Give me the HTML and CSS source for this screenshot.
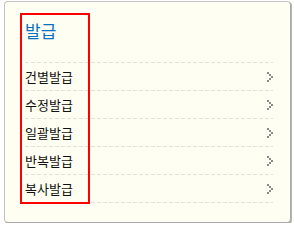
FILE: index.html
```html
<!DOCTYPE html>
<html lang="ko">
<head>
	<meta charset="utf-8">
	<title>발급</title>
	<link rel="stylesheet" href="styles.css">
</head>
<body>
	<div class="panel">
		<h2 class="panel-title">발급</h2>
		<ul class="menu-list">
			<li><span>건별발급</span><svg class="arrow" width="6" height="10" viewBox="0 0 6 10"><rect x="0" y="0" width="2" height="2"/><rect x="2" y="2" width="2" height="2"/><rect x="4" y="4" width="2" height="2"/><rect x="2" y="6" width="2" height="2"/><rect x="0" y="8" width="2" height="2"/></svg></li>
			<li><span>수정발급</span><svg class="arrow" width="6" height="10" viewBox="0 0 6 10"><rect x="0" y="0" width="2" height="2"/><rect x="2" y="2" width="2" height="2"/><rect x="4" y="4" width="2" height="2"/><rect x="2" y="6" width="2" height="2"/><rect x="0" y="8" width="2" height="2"/></svg></li>
			<li><span>일괄발급</span><svg class="arrow" width="6" height="10" viewBox="0 0 6 10"><rect x="0" y="0" width="2" height="2"/><rect x="2" y="2" width="2" height="2"/><rect x="4" y="4" width="2" height="2"/><rect x="2" y="6" width="2" height="2"/><rect x="0" y="8" width="2" height="2"/></svg></li>
			<li><span>반복발급</span><svg class="arrow" width="6" height="10" viewBox="0 0 6 10"><rect x="0" y="0" width="2" height="2"/><rect x="2" y="2" width="2" height="2"/><rect x="4" y="4" width="2" height="2"/><rect x="2" y="6" width="2" height="2"/><rect x="0" y="8" width="2" height="2"/></svg></li>
			<li><span>복사발급</span><svg class="arrow" width="6" height="10" viewBox="0 0 6 10"><rect x="0" y="0" width="2" height="2"/><rect x="2" y="2" width="2" height="2"/><rect x="4" y="4" width="2" height="2"/><rect x="2" y="6" width="2" height="2"/><rect x="0" y="8" width="2" height="2"/></svg></li>
		</ul>
		<div class="highlight"></div>
	</div>
</body>
</html>
```

FILE: styles.css
```css
html, body {
	margin:0;
	padding:0;
	background:#ffffff;
}

body {
	font-family:"Noto Sans CJK KR", "Noto Sans", sans-serif;
}

.panel {
	position:relative;
	box-sizing:border-box;
	margin:1px 3px 0 4px;
	height:222px;
	padding:19px 17px 0 20px;
	background:#fffef2;
	border:1px solid #c4c4c4;
	border-right-color:#a9a9a9;
	border-bottom-color:#a9a9a9;
	border-radius:4px;
	box-shadow:1px 1px 0 #b4b4b4;
}

.panel-title {
	margin:0 0 21px;
	font-size:17px;
	line-height:20px;
	font-weight:normal;
	color:#0a70c2;
}

.menu-list {
	list-style:none;
	margin:0;
	padding:0;
}

.menu-list li {
	display:flex;
	align-items:center;
	justify-content:space-between;
	height:28px;
	padding-top:1px;
	box-sizing:border-box;
	font-size:13px;
	color:#111111;
	background-image:repeating-linear-gradient(to right, #e2e0d8 0 4px, transparent 4px 6px);
	background-size:100% 1px;
	background-repeat:no-repeat;
	background-position:0 0;
}

.menu-list li:last-child {
	height:29px;
	padding-bottom:1px;
	background-image:repeating-linear-gradient(to right, #e2e0d8 0 4px, transparent 4px 6px), repeating-linear-gradient(to right, #e2e0d8 0 4px, transparent 4px 6px);
	background-position:0 0, 0 100%;
	background-size:100% 1px, 100% 1px;
}

.arrow {
	fill:#8a8a8a;
	display:block;
}

.highlight {
	position:absolute;
	left:15px;
	top:11px;
	width:70px;
	height:191px;
	box-sizing:border-box;
	border:2px solid #ff0000;
}
```
